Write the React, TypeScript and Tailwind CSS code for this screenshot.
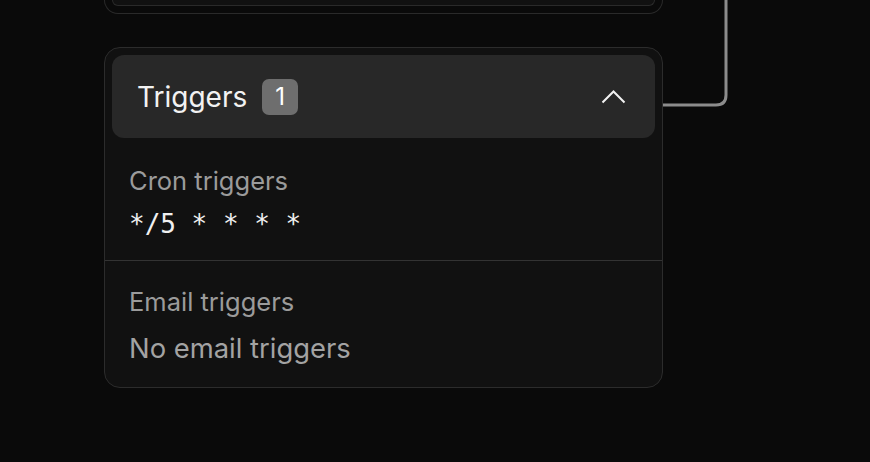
import React from "react";

export default function App() {
  return (
    <div className="relative w-[870px] h-[462px] bg-[#0a0a0a] overflow-hidden" style={{ fontFamily: "Inter, 'Noto Sans', sans-serif" }}>
      <svg className="absolute left-0 top-0" width="870" height="462" fill="none">
        <path d="M662 105 H716 Q726 105 726 95 V0" stroke="#8c8c8c" strokeWidth="3" />
      </svg>
      <div className="ml-[104px] w-[559px] flex flex-col">
        <div className="h-[14px] rounded-b-[16px] border-x border-b border-[#2a2a2a] px-[7px]">
          <div className="h-[6px] rounded-b-[12px] border-x border-b border-[#2a2a2a] bg-[#111111]" />
        </div>
        <div className="relative mt-[33px] rounded-[16px] border border-[#2c2c2c] bg-[#111111] flex flex-col">
          <div className="m-[7px] h-[83px] rounded-[12px] bg-[#282828] flex items-center pl-[25px] pr-[29px]">
            <span className="text-[28px] text-[#f2f2f2]">Triggers</span>
            <span className="ml-[15px] w-[36px] h-[36px] rounded-[7px] bg-[#6e6e6e] text-white text-[24px] flex items-center justify-center">1</span>
            <svg className="ml-auto" width="25" height="14" viewBox="0 0 25 14" fill="none">
              <path d="M1.5 12.5 L12.5 1.5 L23.5 12.5" stroke="#f2f2f2" strokeWidth="2" />
            </svg>
          </div>
          <div className="px-[24px] pt-[18px] pb-[18px] border-b border-[#333333] flex flex-col gap-[7px]">
            <span className="text-[25.5px] leading-[36px] text-[#9b9b9b]">Cron triggers</span>
            <span className="text-[26px] leading-[36px] text-[#f0f0f0]" style={{ fontFamily: "'DejaVu Sans Mono', monospace" }}>*/5 * * * *</span>
          </div>
          <div className="px-[24px] pt-[23px] pb-[21px] flex flex-col gap-[10px]">
            <span className="text-[25.5px] leading-[36px] text-[#9b9b9b]">Email triggers</span>
            <span className="text-[27.4px] leading-[36px] text-[#a3a3a3]">No email triggers</span>
          </div>
        </div>
      </div>
    </div>
  );
}
